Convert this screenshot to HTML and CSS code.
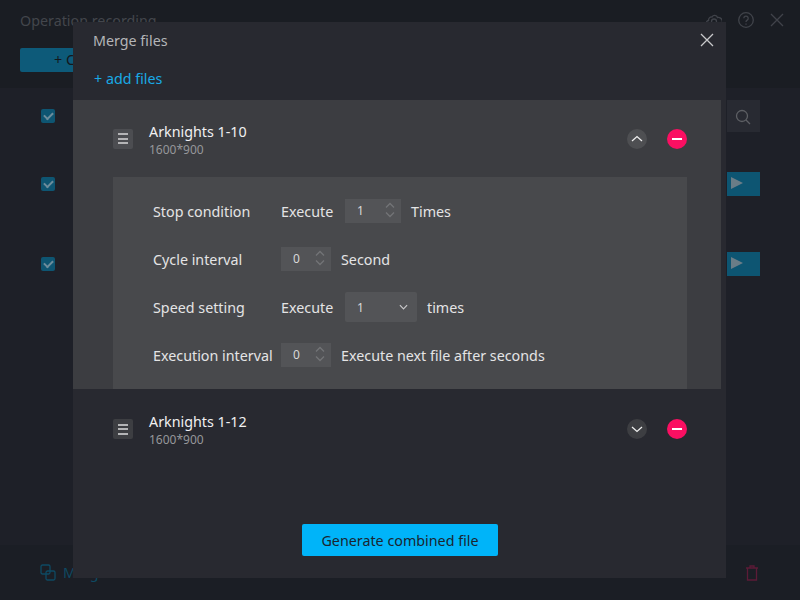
FILE: index.html
```html
<!DOCTYPE html>
<html lang="en">
<head>
  <meta charset="UTF-8"/>
  <title>Operation recording</title>
  <link rel="stylesheet" href="styles.css">
</head>
<body>
<div class="window">
  <header class="top">
    <div class="titlebar">
      <span class="window-title">Operation recording</span>
      <div class="window-icons">
        <svg width="16" height="16" viewBox="0 0 16 16"><path d="M4 13.500H3a2.500 2.500 0 0 1-.4-5A3 3 0 0 1 6 5a3 3 0 0 1 5.500.5 2.800 2.800 0 0 1 1.500 8h-1"/><circle cx="8" cy="9.500" r="2.500"/></svg>
        <svg width="16" height="16" viewBox="0 0 16 16"><circle cx="8" cy="8" r="7.300"/><path d="M5.800 6.200a2.200 2.200 0 1 1 3.400 1.900c-.8.500-1.200.9-1.200 1.900M8 11.500v1.200"/></svg>
        <svg width="14" height="14" viewBox="0 0 14 14"><path d="M1 1l12 12M13 1L1 13"/></svg>
      </div>
    </div>
    <div class="create-btn">+ Create</div>
  </header>

  <section class="rows">
    <div class="row short">
      <span class="check"></span>
      <span class="search-box">
        <svg width="16" height="16" viewBox="0 0 16 16"><circle cx="7" cy="7" r="5.500"/><path d="M11 11l4 4"/></svg>
      </span>
    </div>
    <div class="row">
      <span class="check"></span>
      <span class="play"></span>
    </div>
    <div class="row">
      <span class="check"></span>
      <span class="play"></span>
    </div>
  </section>

  <footer class="bottom">
    <div class="merge-link">
      <svg width="16" height="17" viewBox="0 0 16 17"><rect x="1" y="1" width="9" height="9" rx="1.500"/><rect x="6" y="7" width="9" height="9" rx="1.500"/></svg>
      <span>Merge</span>
    </div>
    <svg class="trash" width="14" height="16" viewBox="0 0 14 16"><path d="M1 3h12M5 3V1h4v2M2.500 3v12h9V3"/></svg>
  </footer>
</div>

<div class="dialog">
  <div class="dialog-head">
    <h2>Merge files</h2>
    <svg class="dialog-close" width="14" height="14" viewBox="0 0 14 14"><path d="M1 1l12 12M13 1L1 13"/></svg>
  </div>
  <div class="add-files">+ add files</div>

  <div class="file open">
    <div class="file-head">
      <span class="grip"><i></i><i></i><i></i></span>
      <div class="file-name">
        <strong>Arknights 1-10</strong>
        <small>1600*900</small>
      </div>
      <span class="toggle">
        <svg width="12" height="7" viewBox="0 0 12 7"><path d="M1 6l5-4.500L11 6"/></svg>
      </span>
      <span class="remove"></span>
    </div>
    <div class="settings">
      <div class="setting">
        <label>Stop condition</label>
        <span class="prefix">Execute</span>
        <span class="stepper wide">1<svg class="arrows" width="10" height="16" viewBox="0 0 10 16"><path d="M1 5.500l4-4 4 4M1 10.500l4 4 4-4"/></svg></span>
        <span>Times</span>
      </div>
      <div class="setting">
        <label>Cycle interval</label>
        <span class="stepper">0<svg class="arrows" width="10" height="16" viewBox="0 0 10 16"><path d="M1 5.500l4-4 4 4M1 10.500l4 4 4-4"/></svg></span>
        <span>Second</span>
      </div>
      <div class="setting">
        <label>Speed setting</label>
        <span class="prefix">Execute</span>
        <span class="select">1<svg width="10" height="6" viewBox="0 0 10 6"><path d="M1 1l4 4 4-4"/></svg></span>
        <span>times</span>
      </div>
      <div class="setting">
        <label>Execution interval</label>
        <span class="stepper">0<svg class="arrows" width="10" height="16" viewBox="0 0 10 16"><path d="M1 5.500l4-4 4 4M1 10.500l4 4 4-4"/></svg></span>
        <span>Execute next file after seconds</span>
      </div>
    </div>
  </div>

  <div class="file closed">
    <div class="file-head">
      <span class="grip"><i></i><i></i><i></i></span>
      <div class="file-name">
        <strong>Arknights 1-12</strong>
        <small>1600*900</small>
      </div>
      <span class="toggle">
        <svg width="12" height="7" viewBox="0 0 12 7"><path d="M1 1l5 4.500L11 1"/></svg>
      </span>
      <span class="remove"></span>
    </div>
  </div>

  <div class="generate">Generate combined file</div>
</div>
</body>
</html>
```
FILE: styles.css
```css
* {
  box-sizing: border-box;
}

body {
  margin: 0;
  width: 800px;
  height: 600px;
  overflow: hidden;
  position: relative;
  font-family: "Noto Sans", "Open Sans", sans-serif;
  font-size: 14.3px;
  color: #d6d6d8;
  background: #1e2028;
}

svg {
  fill: none;
  stroke: currentColor;
  stroke-width: 1.3;
  display: block;
}

/* window behind the dialog */
.window {
  height: 600px;
  display: flex;
  flex-direction: column;
}

.top {
  height: 88px;
  padding: 0 20px;
  background: #1a1d23;
}

.titlebar {
  height: 40px;
  display: flex;
  justify-content: space-between;
  align-items: center;
}

.window-title {
  color: #43464c;
}

.window-icons {
  display: flex;
  align-items: center;
  gap: 16px;
  color: #40434a;
  margin-right: -4px;
}

.create-btn {
  width: 120px;
  height: 24px;
  margin-top: 8px;
  border-radius: 2px;
  padding-left: 34px;
  line-height: 24px;
  background: #0d5a79;
  color: #14171c;
}

.rows {
  flex: 1;
  padding: 0 40px 0 41px;
}

.row {
  height: 80px;
  display: flex;
  justify-content: space-between;
  align-items: center;
}

.row.short {
  height: 56px;
}

.check {
  display: block;
  width: 14px;
  height: 14px;
  border-radius: 2px;
  background: #0e5572;
  position: relative;
}

.check::after {
  content: "";
  position: absolute;
  left: 3px;
  top: 3px;
  width: 7px;
  height: 4px;
  border-left: 2px solid #6d8d9c;
  border-bottom: 2px solid #6d8d9c;
  transform: rotate(-45deg);
}

.search-box {
  width: 33px;
  height: 32px;
  padding: 9px 8px;
  background: #282a32;
  color: #5d5f64;
}

.play {
  display: block;
  width: 33px;
  height: 24px;
  background: #0d5572;
  position: relative;
}

.play::after {
  content: "";
  position: absolute;
  left: 4px;
  top: 5px;
  border-left: 12px solid #6a7d87;
  border-top: 6.500px solid transparent;
  border-bottom: 6.500px solid transparent;
}

.bottom {
  height: 55px;
  padding: 0 41px 0 40px;
  display: flex;
  justify-content: space-between;
  align-items: center;
  background: #1b1e25;
}

.merge-link {
  display: flex;
  align-items: center;
  gap: 7px;
  color: #0e4a63;
}

.trash {
  color: #5c1b37;
}

/* dialog */
.dialog {
  position: absolute;
  left: 73px;
  top: 22px;
  width: 653px;
  height: 556px;
  background: #282930;
}

.dialog-head {
  height: 36px;
  padding: 0 12px 0 20px;
  display: flex;
  justify-content: space-between;
  align-items: center;
}

.dialog-head h2 {
  margin: 0;
  font-size: 14.3px;
  font-weight: normal;
  color: #b4b5b8;
}

.dialog-close {
  color: #c8c9cb;
}

.add-files {
  height: 42px;
  padding: 11px 0 0 21px;
  color: #19a9e6;
}

.file {
  width: 648px;
  padding: 0 34px 0 40px;
}

.file.open {
  height: 289px;
  background: #3c3d41;
}

.file.closed {
  padding-top: 1px;
}

.file-head {
  height: 77px;
  display: flex;
  align-items: center;
}

.closed .file-head {
  height: 78px;
}

.grip {
  width: 20px;
  height: 20px;
  border-radius: 2px;
  background: #4c4d51;
  display: flex;
  flex-direction: column;
  justify-content: center;
  align-items: center;
  gap: 2.500px;
}

.grip i {
  display: block;
  width: 10px;
  height: 2px;
  background: #b4b4b6;
}

.closed .grip,
.closed .toggle {
  background: #3d3e42;
}

.file-name {
  flex: 1;
  margin-left: 16px;
  margin-top: 4px;
  display: flex;
  flex-direction: column;
}

.closed .file-name {
  margin-top: 2px;
}

.file-name strong {
  font-weight: normal;
  color: #f0f0f1;
  line-height: 18px;
}

.file-name small {
  font-size: 12px;
  color: #96979a;
  line-height: 17px;
}

.open .file-name small {
  line-height: 18px;
}

.toggle {
  width: 20px;
  height: 20px;
  border-radius: 50%;
  background: #4e4f52;
  color: #eee;
  display: flex;
  justify-content: center;
  align-items: center;
  margin-right: 20px;
}

.remove {
  width: 20px;
  height: 20px;
  border-radius: 50%;
  background: #fb0f62;
  display: flex;
  justify-content: center;
  align-items: center;
}

.remove::before {
  content: "";
  width: 10px;
  height: 2px;
  background: #fff;
}

.settings {
  height: 212px;
  padding: 10px 0 0 40px;
  background: #48494c;
  color: #e4e4e5;
}

.setting {
  height: 48px;
  display: flex;
  align-items: center;
  gap: 10px;
}

.setting label {
  width: 118px;
  white-space: nowrap;
}

.prefix {
  width: 54px;
}

.stepper {
  width: 50px;
  height: 24px;
  padding-left: 12px;
  background: #535457;
  font-size: 12px;
  line-height: 24px;
  position: relative;
  color: #d8d8d9;
}

.stepper.wide {
  width: 56px;
}

.arrows {
  position: absolute;
  right: 6px;
  top: 3px;
  color: #737477;
}

.select {
  width: 72px;
  height: 30px;
  padding: 0 9px 0 12px;
  border-radius: 2px;
  background: #535457;
  font-size: 12px;
  display: flex;
  justify-content: space-between;
  align-items: center;
  color: #d8d8d9;
}

.select svg {
  width: 9px;
  color: #c8c8ca;
}

.generate {
  position: absolute;
  left: 229px;
  top: 502px;
  width: 196px;
  height: 32px;
  border-radius: 2px;
  background: #00b4f9;
  color: #1b2530;
  line-height: 33px;
  text-align: center;
}
```
